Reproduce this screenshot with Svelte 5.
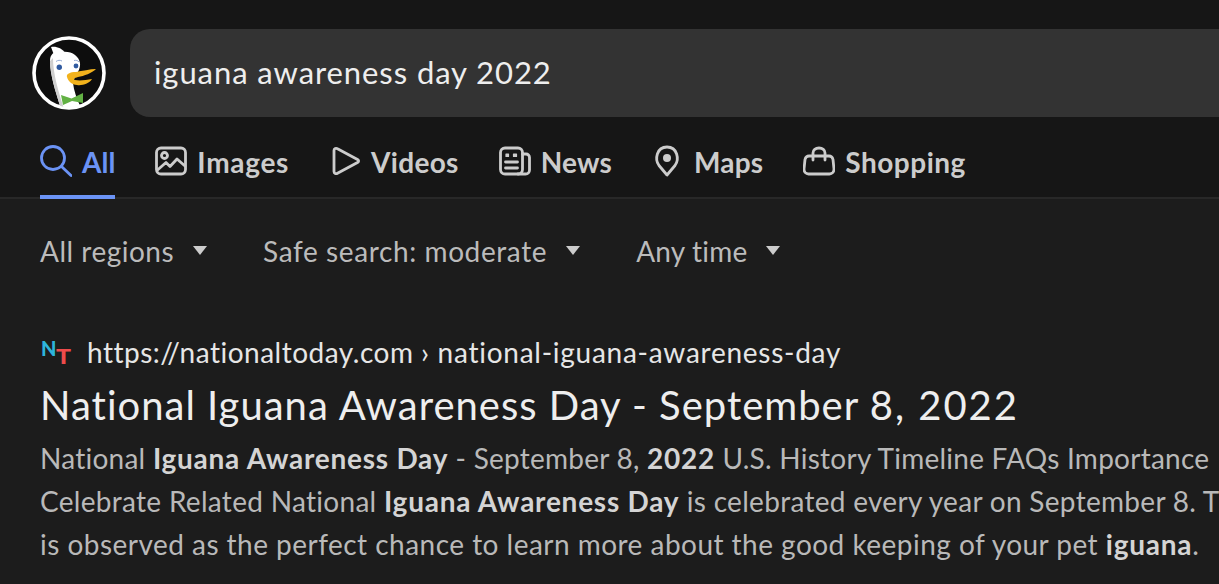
<script>
  const tabs = [
    { label: 'All', icon: 'all', active: true },
    { label: 'Images', icon: 'images' },
    { label: 'Videos', icon: 'videos' },
    { label: 'News', icon: 'news' },
    { label: 'Maps', icon: 'maps' },
    { label: 'Shopping', icon: 'shopping' }
  ];
  const filters = ['All regions', 'Safe search: moderate', 'Any time'];
</script>

<div class="page">
  <header class="header">
    <div class="top">
      <svg class="logo" viewBox="0 0 74 74" aria-label="DuckDuckGo">
        <defs><clipPath id="c"><circle cx="37" cy="37" r="34"/></clipPath></defs>
        <circle cx="37" cy="37" r="35" fill="#0d0d0d" stroke="#fff" stroke-width="3.600"/>
        <g clip-path="url(#c)">
          <path d="M19 11C24 10 30 12 33 17L22 19Z" fill="#fff"/>
          <path d="M18 25C18 18 22 15 31 15.700C40 15 47 20 48 27C48.500 32 46 37 43 40L41 47C42 56 46 66 51 76H30C25 60 18 40 18 25Z" fill="#fff"/>
          <path d="M18 25C18 40 25 60 30 76H33C28 60 21 40 21 22Z" fill="#cfcfcf"/>
          <path d="M29 59L39.500 62.500L51 57L51 67L40 65L31 69Z" fill="#62b144"/>
          <path d="M35 41C34 38 38 36 44 36C50 35 58 33 64 33C60 37 52 40 46 41C42 42 41 43 43 44C48 45 54 44 60 43C58 47 50 50 45 49C40 49 36 45 35 41Z" fill="#f2b21c"/>
        </g>
        <circle cx="27.300" cy="31.300" r="2.700" fill="#2f5aa0"/>
        <circle cx="44" cy="30" r="2.400" fill="#2f5aa0"/>
        <path d="M24 25.500C26 24 28 24 30 25M42 24.500C44 24 46 24.500 47 26" fill="none" stroke="#8aa2cc" stroke-width="0.900"/>
      </svg>
      <div class="search"><span>iguana awareness day 2022</span></div>
    </div>
    <nav class="tabs">
      {#each tabs as t}
        <div class="tab {t.icon}" class:active={t.active}>
          <svg class="icon" viewBox="0 0 32 32" fill="none" stroke="currentColor" stroke-width="2.800" stroke-linecap="round" stroke-linejoin="round">
            {#if t.icon === 'all'}
              <circle cx="13" cy="13" r="11.500"/><path d="M21.500 21.500L31 30.500"/>
            {:else if t.icon === 'images'}
              <rect x="1.500" y="3" width="29" height="26" rx="4.500"/>
              <circle cx="9.500" cy="10.500" r="3"/>
              <path d="M2.500 25L11 17.500L15 21.500L22 14L30 21"/>
            {:else if t.icon === 'videos'}
              <path d="M5 5.500C5 3.500 7 2.800 8.500 3.700L28.500 14.500C30 15.500 30 16.500 28.500 17.500L8.500 28.300C7 29.200 5 28.500 5 26.500Z"/>
            {:else if t.icon === 'news'}
              <rect x="1.500" y="3" width="22" height="26" rx="4.500"/>
              <path d="M23.500 9H27C29 9 30.500 10.500 30.500 12.500V25C30.500 27 29 29 26.500 29H19"/>
              <path d="M7 9H9.500V11.500H7ZM14.500 9H17.500V11.500H14.500Z" fill="currentColor" stroke-width="1.200"/>
              <path d="M6.500 17H18.500M6.500 23H18.500"/>
            {:else if t.icon === 'maps'}
              <path d="M15 30L7 20.500C2.500 14.500 4.500 2 15 2C25.500 2 27.500 14.500 23 20.500Z"/>
              <circle cx="15" cy="13" r="4" fill="currentColor" stroke="none"/>
            {:else if t.icon === 'shopping'}
              <path d="M6 11H26C28.500 11 29.500 12.500 30 14.500L31 24C31 27 29 29 26.500 29H5.500C3 29 1 27 1 24L2 14.500C2.500 12.500 3.500 11 6 11Z"/>
              <path d="M10 15V8C10 5 12.500 3 16 3C19.500 3 22 5 22 8V15"/>
            {/if}
          </svg>
          <span>{t.label}</span>
        </div>
      {/each}
    </nav>
  </header>

  <div class="filters">
    {#each filters as f}
      <div class="filter"><span>{f}</span><i class="caret"></i></div>
    {/each}
  </div>

  <article class="result">
    <div class="url">
      <svg class="fav" viewBox="0 0 32 28" aria-hidden="true">
        <text x="1" y="17" class="n">N</text>
        <text x="56" y="25" class="t" transform="translate(-40 0)" textLength="15" lengthAdjust="spacingAndGlyphs">T</text>
      </svg>
      <span class="link">https://nationaltoday.com <em>› national-iguana-awareness-day</em></span>
    </div>
    <h2>National Iguana Awareness Day - September <span>8, 2022</span></h2>
    <p>National <b>Iguana Awareness Day</b> - September 8, <b>2022</b> U.S. History Timeline FAQs Importance</p>
    <p class="l2">Celebrate Related National <b>Iguana Awareness Day</b> is celebrated every year on September 8. T</p>
    <p class="l3">is observed as the perfect chance to learn more about the good keeping of your pet <b>iguana</b>.</p>
  </article>
</div>

<style>
  :global(body) {
    margin: 0;
    background: #1c1c1c;
    overflow: hidden;
  }
  .page {
    width: 1219px;
    height: 584px;
    overflow: hidden;
    font-family: Lato, "Open Sans", sans-serif;
    color: #eee;
  }
  .header {
    height: 199px;
    box-sizing: border-box;
    background: #161616;
    border-bottom: 2px solid #282828;
    padding: 29px 0 0 32px;
  }
  .top {
    display: flex;
    align-items: center;
    gap: 24px;
    height: 88px;
  }
  .logo {
    width: 74px;
    height: 74px;
    flex: none;
  }
  .search {
    flex: 1;
    height: 88px;
    box-sizing: border-box;
    padding: 0 0 2px 24px;
    display: flex;
    align-items: center;
    background: #333;
    border-radius: 20px 0 0 20px;
    font-size: 31px;
    letter-spacing: 0.920px;
    color: #eee;
  }
  .tabs {
    display: flex;
    gap: 40px;
    margin-left: 8px;
    height: 82px;
    white-space: nowrap;
  }
  .tab {
    display: flex;
    align-items: center;
    gap: 10px;
    height: 82px;
    padding-top: 5px;
    box-sizing: border-box;
    font-size: 28px;
    font-weight: 700;
    letter-spacing: 0.5px;
    color: #ccc;
  }
  .tab span {
    position: relative;
    top: 1px;
  }
  .tab.images { letter-spacing: 0.700px; }
  .tab.videos { letter-spacing: 0.300px; }
  .tab.news { letter-spacing: 0.200px; }
  .tab.maps { letter-spacing: 0.200px; }
  .tab.active {
    color: #6b93f5;
    letter-spacing: 0;
    box-shadow: inset 0 -4px 0 #6b93f5;
  }
  .icon {
    width: 32px;
    height: 32px;
    flex: none;
  }
  .filters {
    display: flex;
    gap: 56px;
    padding: 24px 0 0 40px;
    height: 55px;
    font-size: 28px;
    letter-spacing: 0.5px;
    line-height: 36px;
    color: #bbb;
    white-space: nowrap;
  }
  .filter {
    display: flex;
    align-items: center;
    gap: 19px;
  }
  .filter:nth-child(2) {
    letter-spacing: 0.6px;
  }
  .filter:last-child {
    letter-spacing: 0.2px;
  }
  .caret {
    width: 0;
    height: 0;
    border-left: 7.500px solid transparent;
    border-right: 7.500px solid transparent;
    border-top: 9px solid #ccc;
  }
  .result {
    padding: 55px 0 0 40px;
    white-space: nowrap;
  }
  .url {
    display: flex;
    align-items: center;
    gap: 15px;
    height: 40px;
    font-size: 28px;
    letter-spacing: 0.5px;
    color: #e6e6e6;
  }
  .link {
    margin-bottom: 2px;
  }
  .link em {
    font-style: normal;
    letter-spacing: 0.740px;
  }
  .fav {
    width: 32px;
    height: 28px;
    flex: none;
    overflow: visible;
  }
  .fav text {
    font-family: Lato, sans-serif;
    font-weight: 900;
    font-size: 20px;
    letter-spacing: 0;
  }
  .n { fill: #2eb4dc; }
  .t { fill: #ee4b4b; }
  h2 {
    margin: 7px 0 7px;
    font-size: 40px;
    line-height: 50px;
    font-weight: 400;
    color: #eee;
    letter-spacing: 1px;
  }
  h2 span {
    letter-spacing: 2px;
  }
  p {
    margin: 0;
    font-size: 28px;
    letter-spacing: 0.25px;
    line-height: 43px;
    color: #b9b9b9;
  }
  p.l2 { letter-spacing: 0.300px; }
  p.l3 { letter-spacing: 0.470px; }
  b {
    color: #d4d4d4;
    font-weight: 700;
    letter-spacing: 0.750px;
  }
</style>
